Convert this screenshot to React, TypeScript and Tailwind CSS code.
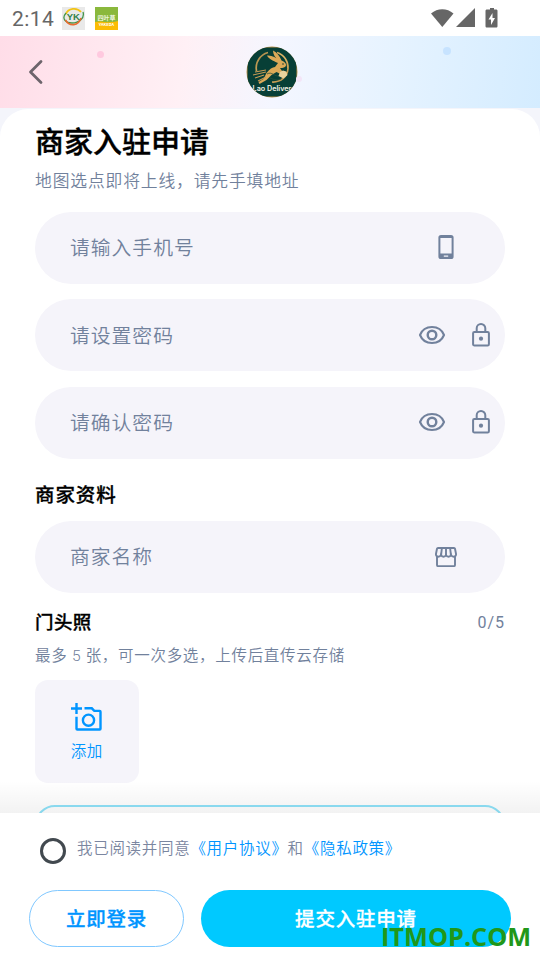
import type { ReactNode } from "react";

function PhoneIcon() {
  return (
    <svg width="16" height="24" viewBox="0 0 16 24" fill="none">
      <path d="M3 0h10a2.6 2.6 0 0 1 2.6 2.6v18.8A2.6 2.6 0 0 1 13 24H3a2.6 2.6 0 0 1-2.6-2.6V2.6A2.6 2.6 0 0 1 3 0Zm-.6 3v15.6h11.2V3H2.4Zm3.4 17.4v1.4h4.4v-1.4H5.8Z" fill="#71819c" fillRule="evenodd" />
    </svg>
  );
}

function EyeIcon() {
  return (
    <svg width="28" height="20" viewBox="0 0 28 20" fill="none" stroke="#71819c" strokeWidth="2.100">
      <path d="M2 10C4 5 8.500 2 14 2s10 3 12 8c-2 5-6.500 8-12 8S4 15 2 10Z" strokeLinejoin="round" />
      <circle cx="14" cy="10" r="4.300" strokeWidth="2.400" />
    </svg>
  );
}

function LockIcon() {
  return (
    <svg width="18" height="24" viewBox="0 0 18 24" fill="none" stroke="#71819c" strokeWidth="2">
      <rect x="1.100" y="9" width="15.800" height="13.500" rx="1.300" />
      <path d="M4.700 9V5.300a4.300 4.300 0 0 1 8.600 0V9" />
      <circle cx="9" cy="15.700" r="2.100" fill="#71819c" stroke="none" />
    </svg>
  );
}

function StoreIcon() {
  return (
    <svg width="22" height="20" viewBox="0 0 22 20" fill="none" stroke="#71819c" strokeWidth="1.900">
      <path d="M3 1h16c.6 0 .9.300 1 .8l1 5c.3 1.700-.8 2.900-2.300 2.900-1.300 0-2.200-.7-2.700-1.900-.4 1.200-1.300 1.900-2.500 1.900S11.400 9 11 8.100c-.4.900-1.300 1.600-2.500 1.600S6.400 9 6 7.800c-.5 1.200-1.400 1.900-2.700 1.900C1.800 9.700.7 8.500 1 6.800l1-5c.1-.5.4-.8 1-.8Z" />
      <path d="m6.900 1-.8 6.800M11 1v7.100M15.100 1l.8 6.800M2 9.300v8.600c0 .8.400 1.200 1.200 1.200h15.600c.8 0 1.200-.4 1.200-1.200V9.300" />
    </svg>
  );
}

function AddPhotoIcon() {
  return (
    <svg width="31" height="28" viewBox="0 0 31 28" fill="none" stroke="#0095ff" strokeWidth="2.400" className="-ml-px">
      <path d="M5.500 0v11M0 5.500h11M13.500 5.300h7.300l2.500 2.600h5.400c.5 0 .8.300.8.800v17c0 .5-.3.800-.8.800H6.300c-.5 0-.8-.3-.8-.8V13.800" />
      <circle cx="17.500" cy="17.200" r="5.600" />
    </svg>
  );
}

function RabbitLogo() {
  return (
    <svg width="52" height="52" viewBox="0 0 52 52" className="ml-[3px]">
      <defs>
        <clipPath id="badge">
          <circle cx="26" cy="26" r="25.500" />
        </clipPath>
        <linearGradient id="gold" x1="0" y1="0" x2="1" y2="1">
          <stop offset="0" stopColor="#a18243" />
          <stop offset=".5" stopColor="#e0b767" />
          <stop offset="1" stopColor="#b58b45" />
        </linearGradient>
      </defs>
      <g clipPath="url(#badge)">
        <rect width="52" height="52" fill="#b98e45" />
        <rect x="1.500" y="1.500" width="49" height="49" rx="8" fill="#073f36" />
        <path d="M10.500 25A16 16 0 0 1 22 6.500M31 6.500c7 2 11.500 9 11 16-.5 8-7 14-16 13.500" fill="none" stroke="url(#gold)" strokeWidth="1.700" />
        <path d="M32 17C27 15 22 12 21 9.500c5-.5 9 2 12 5-4-3-6-6-6-10 4 2 7 6 8.500 10 3 1 5 3 4.500 5-.5 2-3 2.500-6 2.500l2 3 5 1-.5 3-6-1-4-2-5 3-5 5-7 4-1-2 5-3 3-6c3-4 6-6 8.500-6Z" fill="#dca957" />
        <path d="m9 26 11-2M7 29l13-3M9 32l9-3M12 35l8-4" fill="none" stroke="#c79b54" strokeWidth="1.100" />
        <path d="M21 28c5-3 7 3 13 2M24 32c3 1 6 3 11 1" fill="none" stroke="#28513c" strokeWidth=".8" />
        <path d="m34 26 3-1.500 3 1 1.500 3.500-4 3.500-5-2.500Z" fill="#e9d49d" />
        <circle cx="37" cy="18" r=".8" fill="#153d32" />
        <text x="26" y="44.500" textAnchor="middle" fill="#f3f3e6" className="font-['Inter'] text-[7.200px] font-semibold">Lao Deliver</text>
      </g>
    </svg>
  );
}

function StatusBar() {
  return (
    <div className="flex h-9 shrink-0 items-center bg-white pl-3 pr-[42px]">
      <span className="w-[50px] pt-0.5 font-['Roboto'] text-[21px] leading-none tracking-[0.4px] text-[#666]">2:14</span>
      <svg width="23" height="23" viewBox="0 0 23 23" className="mt-px">
        <rect width="23" height="23" fill="#e9e9e9" />
        <path d="M4 7C6 1 15 0 19 5" fill="none" stroke="#f2c316" strokeWidth="1.800" />
        <path d="M4 6c-5 6 0 10 6 10 7 0 13-5 11-11" fill="none" stroke="#44964a" strokeWidth="1.300" />
        <path d="M3.500 13c4 7 13 6 15.500-2" fill="none" stroke="#e96a30" strokeWidth="1.600" />
        <text x="11.300" y="13" textAnchor="middle" fill="#328149" className="font-['Liberation_Sans'] text-[9.500px] font-bold">YK</text>
      </svg>
      <svg width="23" height="23" viewBox="0 0 23 23" className="ml-2.5 mt-px">
        <rect width="23" height="23" fill="#8ab83c" />
        <path d="M0 15c6-2 12 2 23-1v9H0Z" fill="#fbbc05" />
        <text x="11.500" y="12.500" textAnchor="middle" fill="#fff" className="font-['Noto_Sans_CJK_SC'] text-[6px] font-medium">四叶草</text>
        <text x="11.500" y="19" textAnchor="middle" fill="#fff" className="font-['Noto_Sans_CJK_SC'] text-[4px] font-bold">YAKEDA</text>
      </svg>
      <svg width="67" height="20" viewBox="0 0 67 20" className="ml-auto" fill="#666">
        <path d="M0 5.500C6.500-.3 16-.3 22.500 5.500L11.300 19Z" />
        <path d="M44 0v19H25Z" />
        <path d="M59 0h4v1.500h2c1 0 1.500.5 1.500 1.500v15c0 1-.5 1.500-1.500 1.500h-9c-1 0-1.500-.5-1.500-1.500V3c0-1 .5-1.500 1.500-1.500h3Z" />
        <path d="M61.500 5v5H64l-4 7v-5.500h-2.500Z" fill="#fff" />
      </svg>
    </div>
  );
}

function Field({ label, children }: { label: string; children: ReactNode }) {
  return (
    <div className="flex h-[72px] items-center justify-between rounded-full bg-[#f5f4fa] pl-[35px]">
      <span className="pt-[3px] text-[19.8px] font-[350] tracking-[1px] text-[#71819c]">{label}</span>
      {children}
    </div>
  );
}

function PasswordField({ label }: { label: string }) {
  return (
    <Field label={label}>
      <div className="flex items-center gap-[26px] pb-px pr-[15px]">
        <EyeIcon />
        <LockIcon />
      </div>
    </Field>
  );
}

export default function App() {
  return (
    <div className="flex h-[960px] w-[540px] flex-col overflow-hidden bg-[#f4f5fb] font-['Roboto','Noto_Sans_CJK_SC',sans-serif]">
      <StatusBar />
      <header className="relative flex h-[72px] shrink-0 items-center justify-center bg-[linear-gradient(98deg,#ffdde8_0%,#fff0f5_34%,#f4f6ff_51%,#e6f3ff_72%,#d4ecff_100%)]">
        <span className="absolute left-[97px] top-[15px] size-[7px] rounded-full bg-[#ffc9df]" />
        <span className="absolute left-[443px] top-[11px] size-2 rounded-full bg-[#c7e3ff]" />
        <span className="absolute left-[296px] top-10 size-[6px] rounded-full bg-[#f3e5f7]" />
        <svg width="16" height="26" viewBox="0 0 16 26" className="absolute left-7 top-[23px]" fill="none" stroke="#6d646b" strokeWidth="2.800" strokeLinecap="round" strokeLinejoin="round">
          <path d="M13 2.500 2.500 13 13 23.500" />
        </svg>
        <RabbitLogo />
      </header>

      <main className="mt-px min-h-0 flex-1 overflow-hidden rounded-t-[28px] bg-white px-[35px]">
        <h1 className="mt-[13px] text-[29px] font-medium leading-[42px] text-black [-webkit-text-stroke:0.4px_black]">商家入驻申请</h1>
        <p className="mt-[5px] text-[16.8px] font-[350] leading-6 tracking-[0.85px] text-[#71819c]">地图选点即将上线，请先手填地址</p>

        <div className="mt-[18.600px] flex flex-col gap-[15.500px]">
          <Field label="请输入手机号">
            <div className="pb-0.5 pr-[51px]">
              <PhoneIcon />
            </div>
          </Field>
          <PasswordField label="请设置密码" />
          <PasswordField label="请确认密码" />
        </div>

        <h2 className="mb-[9.600px] mt-[22.400px] text-[19.500px] font-medium leading-[30px] tracking-[0.9px] text-black [-webkit-text-stroke:0.3px_black]">商家资料</h2>
        <Field label="商家名称">
          <div className="pr-[48px]">
            <StoreIcon />
          </div>
        </Field>

        <div className="mt-4 flex items-center justify-between leading-7">
          <h3 className="text-[18.500px] font-medium tracking-[0.4px] text-black [-webkit-text-stroke:0.3px_black]">门头照</h3>
          <span className="text-base tracking-[1px] text-[#71819c]">0/5</span>
        </div>
        <p className="mt-[7px] text-[15.500px] font-[350] leading-6 tracking-[0.7px] text-[#71819c]">最多 5 张，可一次多选，上传后直传云存储</p>
        <div className="mt-3 flex size-[103.500px] flex-col items-center rounded-[13px] bg-[#f5f4fa] pt-[23.500px] text-[#0095ff]">
          <AddPhotoIcon />
          <span className="mt-[8.500px] text-[15.500px] font-[350] leading-6 tracking-[0.4px]">添加</span>
        </div>
        <div className="mt-[22px] h-16 rounded-[20px] border-2 border-[#8fe2f8]" />
      </main>

      <footer className="relative h-[147px] shrink-0 bg-white px-7">
        <div className="absolute inset-x-0 -top-8 h-8 bg-linear-to-b from-transparent to-black/5" />
        <div className="flex items-start gap-3 pl-3 pt-[24px]">
          <span className="mt-px size-[26px] rounded-full border-[3px] border-[#42494f]" />
          <p className="-ml-px text-[15.500px] font-[350] leading-6 tracking-[0.7px] text-[#7b86a0]">
            我已阅读并同意<span className="text-[#0095ff]">《用户协议》</span>和<span className="text-[#0095ff]">《隐私政策》</span>
          </p>
        </div>
        <div className="mt-[26px] flex gap-[17px] pl-px text-[19.500px] font-medium tracking-[0.8px] [-webkit-text-stroke:0.3px]">
          <button className="h-[57px] w-[155px] rounded-full border-[1.500px] border-[#80c8ff] pt-[3px] text-[#0095ff]">立即登录</button>
          <button className="h-[57px] w-[310px] rounded-full bg-[#00c9ff] pt-[3px] text-white">提交入驻申请</button>
        </div>
        <span className="absolute left-[381px] top-[106px] font-['Open_Sans'] text-[25.300px] font-bold leading-[34px] text-[#219719]">ITMOP.COM</span>
      </footer>
    </div>
  );
}
